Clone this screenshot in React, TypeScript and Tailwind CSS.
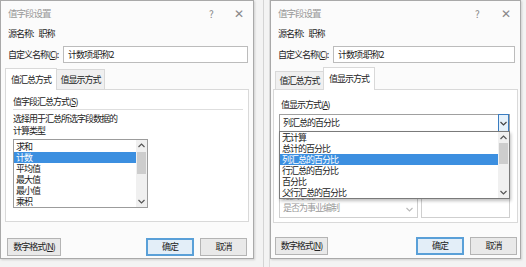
import {FC, ReactNode} from 'react';

const font = {fontFamily: '"Noto Sans CJK SC", "Noto Sans", sans-serif'};

const TitleBar: FC<{qx: string}> = ({qx}) => (
  <div className="relative flex h-[24px] items-center pl-[7px] text-[9.5px] text-[#9a9a9a]">
    <span>值字段设置</span>
    <span className={`absolute top-[5px] text-[10px] tracking-normal text-[#888] ${qx}`}>?</span>
    <span className="absolute right-[9px] top-[4px] text-[12px] leading-[16px] tracking-normal text-[#888]">✕</span>
  </div>
);

const Btn: FC<{children: ReactNode; primary?: boolean; className?: string}> = ({children, primary, className}) => (
  <div
    className={`flex h-[18px] items-center justify-center text-[9px] text-[#222] ${
      primary ? 'border-2 border-[#5aa0d8] bg-[#e3eef8]' : 'border border-[#b4b4b4] bg-[#e9e9e9]'
    } ${className ?? ''}`}
  >
    {children}
  </div>
);

const ScrollBar: FC<{thumbTop: string; thumbH: string}> = ({thumbTop, thumbH}) => (
  <div className="relative w-[11px] shrink-0 bg-[#f0f0f0]">
    <svg className="absolute left-[2px] top-[3px]" width="7" height="5" viewBox="0 0 7 5">
      <path d="M0.5 4 L3.5 1 L6.5 4" fill="none" stroke="#555" strokeWidth="1.2" />
    </svg>
    <div className={`absolute left-[1px] w-[9px] bg-[#cdcdcd] ${thumbTop} ${thumbH}`} />
    <svg className="absolute bottom-[3px] left-[2px]" width="7" height="5" viewBox="0 0 7 5">
      <path d="M0.5 1 L3.5 4 L6.5 1" fill="none" stroke="#555" strokeWidth="1.2" />
    </svg>
  </div>
);

const Header: FC = () => (
  <>
    <div className="flex h-[17px] items-center pl-[7px] text-[#222]">
      <span>源名称:</span>
      <span className="ml-[5px]">职称</span>
    </div>
    <div className="mt-[4px] flex h-[17px] items-center pl-[7px] pr-[5px] text-[#222]">
      <span className="w-[55px]">
        自定义名称(<span className="underline">C</span>):
      </span>
      <div className="flex h-[17px] flex-1 items-center border border-[#bcbcbc] bg-white pl-[4px]">计数项:职称2</div>
    </div>
  </>
);

const LeftDialog: FC = () => {
  const items = ['求和', '计数', '平均值', '最大值', '最小值', '乘积'];
  return (
    <div className="flex h-[259px] w-[254px] shrink-0 flex-col border border-[#a9a9a9] bg-[#fbfbfb] shadow-[1px_1px_2px_rgba(0,0,0,0.15)]">
      <TitleBar qx="left-[208px]" />
      <Header />
      <div className="mt-[4px] flex h-[22px] items-end pl-[4px] text-[#222]">
        <div className="relative z-10 -mb-px flex h-[22px] w-[52px] items-center justify-center border border-b-0 border-[#d9d9d9] bg-white">
          值汇总方式
        </div>
        <div className="flex h-[20px] w-[48px] items-center justify-center border border-l-0 border-b-0 border-[#d9d9d9] bg-[#f0f0f0]">
          值显示方式
        </div>
      </div>
      <div className="mx-[4px] flex h-[133px] flex-col border border-[#d9d9d9] bg-white px-[7px] text-[#222]">
        <div className="mt-[5px] h-[13px] leading-[13px]">
          值字段汇总方式(<span className="underline">S</span>)
        </div>
        <div className="mt-[1px] h-px w-[230px] bg-[#dedede]" />
        <div className="mt-[3px] leading-[12px]">选择用于汇总所选字段数据的</div>
        <div className="leading-[12px]">计算类型</div>
        <div className="mt-[2px] flex h-[69px] w-[135px] border border-[#9c9c9c] bg-white">
          <div className="flex flex-1 flex-col pt-[1px]">
            {items.map((t, i) => (
              <div key={t} className={`h-[11px] pl-[2px] leading-[11px] ${i === 1 ? 'bg-[#3c8fe0] text-white' : ''}`}>
                {t}
              </div>
            ))}
          </div>
          <ScrollBar thumbTop="top-[12px]" thumbH="h-[22px]" />
        </div>
      </div>
      <div className="mt-[16px] flex px-[6px]">
        <Btn className="w-[54px]">
          数字格式(<span className="underline">N</span>)
        </Btn>
        <div className="flex-1" />
        <Btn primary className="w-[48px]">
          确定
        </Btn>
        <Btn className="ml-[6px] w-[47px]">取消</Btn>
      </div>
    </div>
  );
};

const RightDialog: FC = () => {
  const items = ['无计算', '总计的百分比', '列汇总的百分比', '行汇总的百分比', '百分比', '父行汇总的百分比'];
  return (
    <div className="relative flex h-[259px] w-[251px] shrink-0 flex-col border border-[#a9a9a9] bg-[#fbfbfb] shadow-[1px_1px_2px_rgba(0,0,0,0.15)]">
      <TitleBar qx="left-[204px]" />
      <Header />
      <div className="mt-[4px] flex h-[22px] items-end pl-[4px] text-[#222]">
        <div className="flex h-[18px] w-[48px] items-center justify-center border border-r-0 border-b-0 border-[#d9d9d9] bg-[#f0f0f0]">
          值汇总方式
        </div>
        <div className="relative z-10 -mb-px flex h-[23px] w-[52px] items-center justify-center border border-b-0 border-[#d9d9d9] bg-white">
          值显示方式
        </div>
      </div>
      <div className="relative mx-[2px] flex h-[134px] flex-col border border-[#d9d9d9] bg-white px-[5px] text-[#222]">
        <div className="mt-[8px] h-[13px] pl-[2px] leading-[13px]">
          值显示方式(<span className="underline">A</span>)
        </div>
        <div className="mt-[3px] flex h-[18px] w-[231px] items-center border border-[#a0a0a0] bg-white pl-[3px]">
          <span className="flex-1">列汇总的百分比</span>
          <div className="flex h-[18px] w-[11px] items-center justify-center border border-[#3a7cc0] bg-[#e5f1fb]">
            <svg width="7" height="5" viewBox="0 0 7 5">
              <path d="M0.5 1 L3.5 4 L6.5 1" fill="none" stroke="#444" strokeWidth="1.2" />
            </svg>
          </div>
        </div>
        <div className="mt-[8px] flex gap-[3px]">
          <div className="relative flex h-[78px] w-[139px] flex-col justify-end overflow-hidden border border-[#cfcfcf] pb-[3px] pl-[3px] text-[#9a9a9a]">
            <div className="h-[12px] leading-[12px]">职称</div>
            <div className="h-[12px] leading-[12px]">最高学历</div>
            <div className="h-[12px] leading-[12px]">是否为事业编制</div>
            <svg className="absolute bottom-[5px] right-[4px]" width="7" height="5" viewBox="0 0 7 5">
              <path d="M0.5 1 L3.5 4 L6.5 1" fill="none" stroke="#bbb" strokeWidth="1.2" />
            </svg>
          </div>
          <div className="h-[78px] w-[89px] border border-[#cfcfcf]" />
        </div>
        <div className="absolute left-[5px] top-[41px] z-20 flex h-[68px] w-[231px] border border-[#7a7a7a] bg-white shadow-[1px_2px_3px_rgba(0,0,0,0.25)]">
          <div className="flex flex-1 flex-col">
            {items.map((t, i) => (
              <div key={t} className={`h-[11px] pl-[2px] leading-[11px] ${i === 2 ? 'bg-[#3c8fe0] text-white' : ''}`}>
                {t}
              </div>
            ))}
          </div>
          <ScrollBar thumbTop="top-[11px]" thumbH="h-[21px]" />
        </div>
      </div>
      <div className="mt-[14px] flex pl-[4px] pr-[3px]">
        <Btn className="w-[53px]">
          数字格式(<span className="underline">N</span>)
        </Btn>
        <div className="flex-1" />
        <Btn primary className="w-[48px]">
          确定
        </Btn>
        <Btn className="ml-[6px] w-[47px]">取消</Btn>
      </div>
    </div>
  );
};

export default function App() {
  return (
    <div className="flex h-[267px] w-[526px] overflow-hidden bg-[#f3f3f3] text-[9px] tracking-[-1px]" style={font}>
      <LeftDialog />
      <div className="h-full w-[16px] shrink-0 border-r border-[#dcdcdc] pr-[5px]">
        <div className="ml-[9px] h-full w-px bg-[#d4d4d4]" />
      </div>
      <RightDialog />
      <div className="flex-1" />
    </div>
  );
}
